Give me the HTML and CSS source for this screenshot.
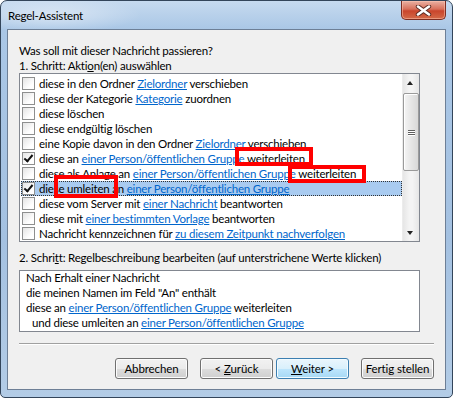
FILE: index.html
```html
<!DOCTYPE html>
<html lang="de">
<head>
  <meta charset="UTF-8">
  <title>Regel-Assistent</title>
  <link rel="stylesheet" href="styles.css">
</head>
<body>
  <div class="window">
    <div class="titlebar">
      <span class="title">Regel-Assistent</span>
      <button class="close" title="Schließen">
        <svg width="17" height="11" viewBox="0 0 17 11">
          <path d="M3 1.5 L14 9.5 M14 1.5 L3 9.5" stroke="#5a2a22" stroke-width="4.4" stroke-linecap="round"/>
          <path d="M3 1.5 L14 9.5 M14 1.5 L3 9.5" stroke="#fff" stroke-width="2.6" stroke-linecap="round"/>
        </svg>
      </button>
    </div>

    <div class="client">
      <p class="line">Was soll mit dieser Nachricht passieren?</p>
      <p class="line">1. Schritt: Akti<u>o</u>n(en) auswählen</p>

      <div class="list">
        <div class="rows">
          <div class="row"><span class="cb"></span><span>diese in den Ordner <a href="#">Zielordner</a> verschieben</span></div>
          <div class="row"><span class="cb"></span><span>diese der Kategorie <a href="#">Kategorie</a> zuordnen</span></div>
          <div class="row"><span class="cb"></span><span>diese löschen</span></div>
          <div class="row"><span class="cb"></span><span>diese endgültig löschen</span></div>
          <div class="row"><span class="cb"></span><span>eine Kopie davon in den Ordner <a href="#">Zielordner</a> verschieben</span></div>
          <div class="row"><span class="cb checked"></span><span>diese an <a href="#">einer Person/öffentlichen Gruppe</a> <span class="mark mark-1">weiterleiten</span></span></div>
          <div class="row"><span class="cb"></span><span>diese als Anlage an <a href="#">einer Person/öffentlichen Gruppe</a> <span class="mark mark-2">weiterleiten</span></span></div>
          <div class="row selected"><span class="cb checked"></span><span>diese <span class="mark mark-3">umleiten</span> an <a href="#">einer Person/öffentlichen Gruppe</a></span></div>
          <div class="row"><span class="cb"></span><span>diese vom Server mit <a href="#">einer Nachricht</a> beantworten</span></div>
          <div class="row"><span class="cb"></span><span>diese mit <a href="#">einer bestimmten Vorlage</a> beantworten</span></div>
          <div class="row"><span class="cb"></span><span>Nachricht kennzeichnen für <a href="#">zu diesem Zeitpunkt nachverfolgen</a></span></div>
        </div>
        <div class="scrollbar">
          <div class="arrow up"></div>
          <div class="track">
            <div class="thumb"><span></span><span></span><span></span></div>
          </div>
          <div class="arrow down"></div>
        </div>
      </div>

      <p class="line step2">2. Schri<u>t</u>t: Regelbeschreibung bearbeiten (auf unterstrichene Werte klicken)</p>

      <div class="desc">
        <div class="desc-text">
          <div>Nach Erhalt einer Nachricht</div>
          <div>die meinen Namen im Feld "An" enthält</div>
          <div>diese an <a href="#">einer Person/öffentlichen Gruppe</a> weiterleiten</div>
          <div class="indent">und diese umleiten an <a href="#">einer Person/öffentlichen Gruppe</a></div>
        </div>
      </div>

      <div class="separator"></div>

      <div class="buttons">
        <button class="btn">Abbrechen</button>
        <button class="btn back">&lt; <u>Z</u>urück</button>
        <button class="btn default"><u>W</u>eiter &gt;</button>
        <button class="btn">Fertig stellen</button>
      </div>
    </div>
  </div>
</body>
</html>
```

FILE: styles.css
```css
body {
  margin: 0;
  font-family: 'Lato', sans-serif;
  font-size: 11.5px;
  letter-spacing: -0.2px;
  color: #000;
  background: #fff;
}
.window {
  width: 453px;
  height: 398px;
  box-sizing: border-box;
  border: 1px solid #33455a;
  border-radius: 7px 7px 5px 5px;
  background:
    radial-gradient(ellipse 90px 18px at 50px 14px, rgba(255, 255, 255, 0.45), rgba(255, 255, 255, 0)),
    linear-gradient(to bottom, #c6daef 0, #aac7e6 28px, #a4c1e1 60%, #b3cce6 100%);
  display: flex;
  flex-direction: column;
}
.titlebar {
  height: 28px;
  display: flex;
  justify-content: space-between;
  align-items: flex-start;
  padding-left: 7px;
}
.title {
  line-height: 29px;
  font-size: 11.5px;
}
.close {
  width: 45px;
  height: 19px;
  margin-right: 6px;
  padding: 0;
  border: 1px solid #7d2d22;
  border-top: none;
  border-radius: 0 0 5px 5px;
  background: linear-gradient(to bottom, #eab1a3 0, #d8705b 45%, #c9452c 55%, #d46a48 100%);
  display: flex;
  align-items: center;
  justify-content: center;
  box-shadow: inset 0 0 0 1px rgba(255, 200, 180, 0.5);
}
.client {
  flex: 1;
  margin: 0 6px 7px 6px;
  border: 1px solid #6d7f96;
  background: #f0f0f0;
  padding: 13px 11px 10px 11px;
  display: flex;
  flex-direction: column;
}
.line {
  margin: 0;
  line-height: 15px;
  white-space: nowrap;
}
a {
  color: #0066cc;
  text-decoration: underline;
}

/* list with checkboxes */
.list {
  width: 401px;
  height: 169px;
  box-sizing: border-box;
  margin-top: 0;
  border: 1px solid #828790;
  background: #fff;
  display: flex;
}
.rows {
  flex: 1;
  padding: 2px 0 0 1px;
  overflow: hidden;
}
.row {
  height: 15px;
  display: flex;
  align-items: center;
  gap: 4px;
  padding-left: 1px;
  white-space: nowrap;
  box-sizing: border-box;
}
.row.selected {
  background: #a9cbf0;
  outline: 1px dotted #333;
  outline-offset: -1px;
}
.cb {
  width: 13px;
  height: 13px;
  box-sizing: border-box;
  flex: none;
  border: 1px solid #8e8f8f;
  background: linear-gradient(135deg, #e4e4e4, #fff 70%);
  position: relative;
}
.cb.checked::after {
  content: "";
  position: absolute;
  left: 3px;
  top: 0px;
  width: 3px;
  height: 7px;
  border: solid #111;
  border-width: 0 2px 2px 0;
  transform: rotate(40deg);
}
.mark {
  position: relative;
  display: inline-block;
  line-height: 15px;
}
.mark::after {
  content: "";
  position: absolute;
  border: 4px solid #ff0000;
}
.mark-1::after { left: -12px; right: -8px; top: -4px; bottom: 0; }
.mark-2::after { left: -10px; right: -10px; top: -1px; bottom: -2px; }
.mark-3::after { left: -13px; right: -9px; top: -6px; bottom: -2px; }

/* scrollbar */
.scrollbar {
  width: 17px;
  display: flex;
  flex-direction: column;
  background: linear-gradient(to right, #e6e6e6, #f4f4f4 40%, #f4f4f4 60%, #e6e6e6);
  border-left: 1px solid #ececec;
  box-sizing: border-box;
}
.arrow {
  height: 17px;
  position: relative;
}
.arrow::after {
  content: "";
  position: absolute;
  left: 4px;
  width: 0;
  height: 0;
  border-left: 3.5px solid transparent;
  border-right: 3.5px solid transparent;
}
.arrow.up::after {
  top: 7px;
  border-bottom: 4px solid #222;
}
.arrow.down::after {
  top: 7px;
  border-top: 4px solid #222;
}
.track {
  flex: 1;
  padding-top: 2px;
}
.thumb {
  height: 78px;
  box-sizing: border-box;
  border: 1px solid #9a9a9a;
  border-radius: 2px;
  background: linear-gradient(to right, #f5f5f5, #e6e6e6 50%, #d8d8d8);
  box-shadow: inset 1px 1px 0 #fff;
  display: flex;
  flex-direction: column;
  justify-content: center;
  align-items: center;
  gap: 1px;
}
.thumb span {
  width: 7px;
  height: 1px;
  background: #5f5f5f;
  box-shadow: 0 1px 0 #fff;
}

.step2 {
  margin-top: 8px;
}
.desc {
  width: 401px;
  height: 62px;
  box-sizing: border-box;
  margin-top: 5px;
  border: 1px solid #828790;
  background: #fff;
  padding: 0 0 0 6px;
  line-height: 15px;
  white-space: nowrap;
  overflow: hidden;
}
.desc-text {
  margin-top: -1px;
}
.desc .indent {
  padding-left: 6px;
}
.separator {
  margin-top: 11px;
  height: 1px;
  background: #a0a0a0;
  border-bottom: 1px solid #fff;
}
.buttons {
  margin-top: 13px;
  display: flex;
  justify-content: flex-end;
}
.btn {
  width: 73px;
  height: 21px;
  margin-left: 12px;
  padding: 0;
  font-family: 'Lato', sans-serif;
  font-size: 11.5px;
  letter-spacing: -0.1px;
  color: #000;
  white-space: nowrap;
  border: 1px solid #707070;
  border-radius: 3px;
  background: linear-gradient(to bottom, #f2f2f2 0, #ebebeb 50%, #dddddd 50%, #cfcfcf 100%);
  box-shadow: inset 0 0 0 1px #fcfcfc;
}
.btn.default {
  margin-left: 3px;
  border-color: #3c7fb1;
  background: linear-gradient(to bottom, #eaf6fd 0, #d9f0fc 50%, #bee6fd 50%, #a7d9f5 100%);
  box-shadow: inset 0 0 0 1px #f2fbff;
}
```
